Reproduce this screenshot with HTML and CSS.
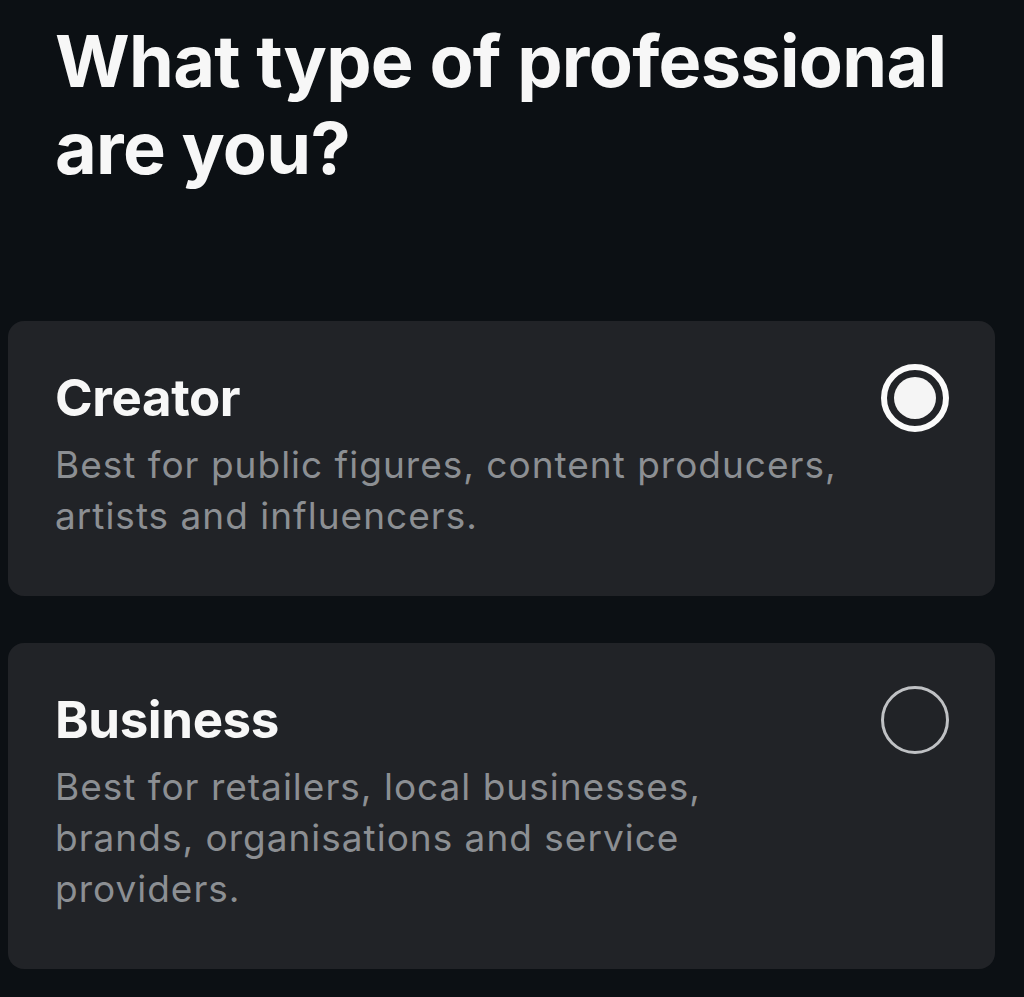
FILE: index.html
```html
<!DOCTYPE html>
<html>
<head>
<meta charset="utf-8">
<link rel="stylesheet" href="styles.css">
</head>
<body>
<main class="page">
  <h1 class="heading">What type of professional are you?</h1>
  <div class="options">
    <div class="card">
      <div class="card-text">
        <div class="card-title">Creator</div>
        <div class="card-desc">Best for public figures, content producers, artists and influencers.</div>
      </div>
      <div class="radio radio-on"><span class="dot"></span></div>
    </div>
    <div class="card">
      <div class="card-text">
        <div class="card-title">Business</div>
        <div class="card-desc">Best for retailers, local businesses, brands, organisations and service providers.</div>
      </div>
      <div class="radio radio-off"></div>
    </div>
  </div>
</main>
</body>
</html>
```
FILE: styles.css
```css
html, body {
  margin: 0;
  padding: 0;
  background: #0c1014;
}
body {
  font-family: Inter, "Liberation Sans", sans-serif;
  color: #f5f5f5;
  width: 1024px;
  height: 997px;
  overflow: hidden;
}
.page {
  padding: 0 29px 0 8px;
}
.heading {
  margin: 17px 0 0 47px;
  font-size: 72px;
  line-height: 87px;
  font-weight: 700;
  letter-spacing: -0.7px;
  color: #f7f7f7;
  max-width: 940px;
}
.options {
  margin-top: 130px;
  display: flex;
  flex-direction: column;
  gap: 47px;
}
.card {
  background: #212327;
  border-radius: 16px;
  display: flex;
  align-items: flex-start;
  padding: 47px 46px 55px 47px;
}
.card-text {
  flex: 1;
}
.card-title {
  font-size: 51px;
  line-height: 60px;
  font-weight: 700;
  color: #f7f7f7;
  letter-spacing: -0.4px;
}
.card-desc {
  margin-top: 11px;
  font-size: 37px;
  line-height: 51px;
  color: #8c8f93;
  letter-spacing: 1px;
  max-width: 790px;
}
.radio {
  flex: none;
  width: 68px;
  height: 68px;
  box-sizing: border-box;
  border-radius: 50%;
  margin-top: -4px;
  display: flex;
  align-items: center;
  justify-content: center;
}
.radio-on {
  border: 6px solid #fafafa;
}
.radio-on .dot {
  width: 42px;
  height: 42px;
  border-radius: 50%;
  background: #f5f5f5;
}
.radio-off {
  border: 3px solid #bfc1c4;
}
```
